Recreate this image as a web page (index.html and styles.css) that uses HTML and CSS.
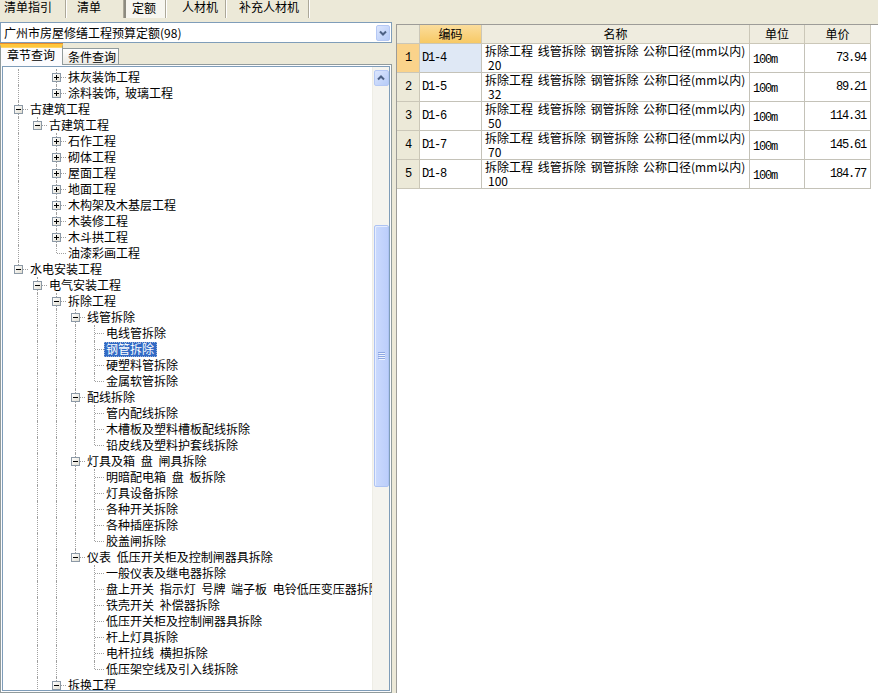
FILE: index.html
```html
<!DOCTYPE html>
<html lang="zh-CN">
<head>
<meta charset="utf-8">
<title>定额</title>
<link rel="stylesheet" href="styles.css">
</head>
<body>
<div class="topbar">
  <div class="ttab ttab-1">清单指引</div>
  <div class="ttab ttab-2">清单</div>
  <div class="ttab ttab-3 on">定额</div>
  <div class="ttab ttab-4">人材机</div>
  <div class="ttab ttab-5">补充人材机</div>
</div>
<div class="main">
  <div class="left">
    <div class="combo">
      <span class="combo-text">广州市房屋修缮工程预算定额(98)</span>
      <span class="combo-btn"><svg width="8" height="6" viewBox="0 0 8 6"><polyline points="1,1.5 4,4.5 7,1.5" fill="none" stroke="#4d6185" stroke-width="2"/></svg></span>
    </div>
    <div class="tabs">
      <div class="tab on">章节查询</div>
      <div class="tab">条件查询</div>
    </div>
    <div class="tabpage">
      <div class="tree">
        <div class="rows">
          <div class="row"><span class="g i"></span><span class="g"></span><span class="g t"><b class="bx p"></b></span><span class="lbl">抹灰装饰工程</span></div>
          <div class="row"><span class="g i"></span><span class="g"></span><span class="g l"><b class="bx p"></b></span><span class="lbl">涂料装饰, 玻璃工程</span></div>
          <div class="row"><span class="g t"><b class="bx m"></b></span><span class="lbl">古建筑工程</span></div>
          <div class="row"><span class="g i"></span><span class="g l"><b class="bx m"></b></span><span class="lbl">古建筑工程</span></div>
          <div class="row"><span class="g i"></span><span class="g"></span><span class="g t"><b class="bx p"></b></span><span class="lbl">石作工程</span></div>
          <div class="row"><span class="g i"></span><span class="g"></span><span class="g t"><b class="bx p"></b></span><span class="lbl">砌体工程</span></div>
          <div class="row"><span class="g i"></span><span class="g"></span><span class="g t"><b class="bx p"></b></span><span class="lbl">屋面工程</span></div>
          <div class="row"><span class="g i"></span><span class="g"></span><span class="g t"><b class="bx p"></b></span><span class="lbl">地面工程</span></div>
          <div class="row"><span class="g i"></span><span class="g"></span><span class="g t"><b class="bx p"></b></span><span class="lbl">木构架及木基层工程</span></div>
          <div class="row"><span class="g i"></span><span class="g"></span><span class="g t"><b class="bx p"></b></span><span class="lbl">木装修工程</span></div>
          <div class="row"><span class="g i"></span><span class="g"></span><span class="g t"><b class="bx p"></b></span><span class="lbl">木斗拱工程</span></div>
          <div class="row"><span class="g i"></span><span class="g"></span><span class="g l"></span><span class="lbl">油漆彩画工程</span></div>
          <div class="row"><span class="g l"><b class="bx m"></b></span><span class="lbl">水电安装工程</span></div>
          <div class="row"><span class="g"></span><span class="g t"><b class="bx m"></b></span><span class="lbl">电气安装工程</span></div>
          <div class="row"><span class="g"></span><span class="g i"></span><span class="g t"><b class="bx m"></b></span><span class="lbl">拆除工程</span></div>
          <div class="row"><span class="g"></span><span class="g i"></span><span class="g i"></span><span class="g t"><b class="bx m"></b></span><span class="lbl">线管拆除</span></div>
          <div class="row"><span class="g"></span><span class="g i"></span><span class="g i"></span><span class="g i"></span><span class="g t"></span><span class="lbl">电线管拆除</span></div>
          <div class="row"><span class="g"></span><span class="g i"></span><span class="g i"></span><span class="g i"></span><span class="g t"></span><span class="lbl sel">钢管拆除</span></div>
          <div class="row"><span class="g"></span><span class="g i"></span><span class="g i"></span><span class="g i"></span><span class="g t"></span><span class="lbl">硬塑料管拆除</span></div>
          <div class="row"><span class="g"></span><span class="g i"></span><span class="g i"></span><span class="g i"></span><span class="g l"></span><span class="lbl">金属软管拆除</span></div>
          <div class="row"><span class="g"></span><span class="g i"></span><span class="g i"></span><span class="g t"><b class="bx m"></b></span><span class="lbl">配线拆除</span></div>
          <div class="row"><span class="g"></span><span class="g i"></span><span class="g i"></span><span class="g i"></span><span class="g t"></span><span class="lbl">管内配线拆除</span></div>
          <div class="row"><span class="g"></span><span class="g i"></span><span class="g i"></span><span class="g i"></span><span class="g t"></span><span class="lbl">木槽板及塑料槽板配线拆除</span></div>
          <div class="row"><span class="g"></span><span class="g i"></span><span class="g i"></span><span class="g i"></span><span class="g l"></span><span class="lbl">铅皮线及塑料护套线拆除</span></div>
          <div class="row"><span class="g"></span><span class="g i"></span><span class="g i"></span><span class="g t"><b class="bx m"></b></span><span class="lbl">灯具及箱 盘 闸具拆除</span></div>
          <div class="row"><span class="g"></span><span class="g i"></span><span class="g i"></span><span class="g i"></span><span class="g t"></span><span class="lbl">明暗配电箱 盘 板拆除</span></div>
          <div class="row"><span class="g"></span><span class="g i"></span><span class="g i"></span><span class="g i"></span><span class="g t"></span><span class="lbl">灯具设备拆除</span></div>
          <div class="row"><span class="g"></span><span class="g i"></span><span class="g i"></span><span class="g i"></span><span class="g t"></span><span class="lbl">各种开关拆除</span></div>
          <div class="row"><span class="g"></span><span class="g i"></span><span class="g i"></span><span class="g i"></span><span class="g t"></span><span class="lbl">各种插座拆除</span></div>
          <div class="row"><span class="g"></span><span class="g i"></span><span class="g i"></span><span class="g i"></span><span class="g l"></span><span class="lbl">胶盖闸拆除</span></div>
          <div class="row"><span class="g"></span><span class="g i"></span><span class="g i"></span><span class="g l"><b class="bx m"></b></span><span class="lbl">仪表 低压开关柜及控制闸器具拆除</span></div>
          <div class="row"><span class="g"></span><span class="g i"></span><span class="g i"></span><span class="g"></span><span class="g t"></span><span class="lbl">一般仪表及继电器拆除</span></div>
          <div class="row"><span class="g"></span><span class="g i"></span><span class="g i"></span><span class="g"></span><span class="g t"></span><span class="lbl">盘上开关 指示灯 号牌 端子板 电铃低压变压器拆除</span></div>
          <div class="row"><span class="g"></span><span class="g i"></span><span class="g i"></span><span class="g"></span><span class="g t"></span><span class="lbl">铁壳开关 补偿器拆除</span></div>
          <div class="row"><span class="g"></span><span class="g i"></span><span class="g i"></span><span class="g"></span><span class="g t"></span><span class="lbl">低压开关柜及控制闸器具拆除</span></div>
          <div class="row"><span class="g"></span><span class="g i"></span><span class="g i"></span><span class="g"></span><span class="g t"></span><span class="lbl">杆上灯具拆除</span></div>
          <div class="row"><span class="g"></span><span class="g i"></span><span class="g i"></span><span class="g"></span><span class="g t"></span><span class="lbl">电杆拉线 横担拆除</span></div>
          <div class="row"><span class="g"></span><span class="g i"></span><span class="g i"></span><span class="g"></span><span class="g l"></span><span class="lbl">低压架空线及引入线拆除</span></div>
          <div class="row"><span class="g"></span><span class="g i"></span><span class="g t"><b class="bx m"></b></span><span class="lbl">拆换工程</span></div>
        </div>
        <div class="vscroll">
          <div class="sb-btn"><svg width="8" height="6" viewBox="0 0 8 6"><polyline points="1,4.5 4,1.5 7,4.5" fill="none" stroke="#4d6185" stroke-width="2"/></svg></div>
          <div class="sb-thumb"><svg width="7" height="8" viewBox="0 0 7 8"><path d="M0 0.5H7M0 2.5H7M0 4.5H7M0 6.5H7" stroke="#8ea7e3" stroke-width="1"/><path d="M1 1.5H7M1 3.5H7M1 5.5H7M1 7.5H7" stroke="#eef3fe" stroke-width="1"/></svg></div>
        </div>
      </div>
    </div>
  </div>
  <div class="right">
    <div class="grid">
      <div class="c h rh"></div>
      <div class="c h hsel">编码</div>
      <div class="c h">名称</div>
      <div class="c h">单位</div>
      <div class="c h">单价</div>

      <div class="c rh rsel mono">1</div>
      <div class="c code csel mono">D1-4</div>
      <div class="c name"><div>拆除工程 线管拆除 钢管拆除 公称口径(mm以内)</div><div class="l2">20</div></div>
      <div class="c unit mono">100m</div>
      <div class="c price mono">73.94</div>

      <div class="c rh mono">2</div>
      <div class="c code mono">D1-5</div>
      <div class="c name"><div>拆除工程 线管拆除 钢管拆除 公称口径(mm以内)</div><div class="l2">32</div></div>
      <div class="c unit mono">100m</div>
      <div class="c price mono">89.21</div>

      <div class="c rh mono">3</div>
      <div class="c code mono">D1-6</div>
      <div class="c name"><div>拆除工程 线管拆除 钢管拆除 公称口径(mm以内)</div><div class="l2">50</div></div>
      <div class="c unit mono">100m</div>
      <div class="c price mono">114.31</div>

      <div class="c rh mono">4</div>
      <div class="c code mono">D1-7</div>
      <div class="c name"><div>拆除工程 线管拆除 钢管拆除 公称口径(mm以内)</div><div class="l2">70</div></div>
      <div class="c unit mono">100m</div>
      <div class="c price mono">145.61</div>

      <div class="c rh mono">5</div>
      <div class="c code mono">D1-8</div>
      <div class="c name"><div>拆除工程 线管拆除 钢管拆除 公称口径(mm以内)</div><div class="l2">100</div></div>
      <div class="c unit mono">100m</div>
      <div class="c price mono">184.77</div>
    </div>
  </div>
</div>
</body>
</html>
```
FILE: styles.css
```css
* { box-sizing: border-box; }
html, body { margin: 0; }
body {
  height: 693px;
  overflow: hidden;
  background: #ece9d8;
  font-family: "Noto Sans CJK SC", "Noto Sans", sans-serif;
  font-size: 12px;
  color: #000;
  display: flex;
  flex-direction: column;
}

/* top tab strip */
.topbar { height: 21px; flex: none; display: flex; }
.ttab {
  height: 18px;
  line-height: 13px;
  white-space: nowrap;
  border-right: 1px solid #aca899;
  box-shadow: 1px 0 0 #fff;
}
.ttab-1 { width: 66px; padding-left: 4px; }
.ttab-2 { width: 58px; padding-left: 11px; }
.ttab-3 { width: 42px; padding-left: 6px; }
.ttab-4 { width: 60px; padding-left: 16px; }
.ttab-5 { width: 83px; padding-left: 13px; }
.ttab.on {
  background: #f7f6f0;
  border-left: 2px solid #8d8b80;
  padding-top: 1px;
}

.main { flex: 1; display: flex; gap: 4px; min-height: 0; }
.left { width: 392px; flex: none; display: flex; flex-direction: column; }

/* combo */
.combo {
  margin-top: 1px;
  height: 21px;
  flex: none;
  border: 1px solid #7f9db9;
  background: #fff;
  display: flex;
  align-items: center;
  justify-content: space-between;
  padding: 0 1px 0 3px;
}
.combo-text { line-height: 16px; white-space: nowrap; }
.combo-btn {
  width: 14px;
  height: 16px;
  border: 1px solid #b5c8f4;
  border-radius: 2px;
  background: linear-gradient(135deg, #dce6fd, #b6cbf8);
  display: flex;
  align-items: center;
  justify-content: center;
}

/* sub tabs */
.tabs {
  margin-top: 1px;
  height: 21px;
  flex: none;
  display: flex;
  align-items: flex-end;
  margin-bottom: -1px;
}
.tab {
  height: 17px;
  width: 56px;
  padding-left: 5px;
  line-height: 15px;
  border: 1px solid #919b9c;
  border-left: none;
  background: linear-gradient(#ffffff, #ecebe6);
  white-space: nowrap;
}
.tab.on {
  position: relative;
  z-index: 1;
  height: 21px;
  width: 63px;
  padding-left: 6px;
  line-height: 16px;
  border-left: 1px solid #919b9c;
  border-top: 3px solid #ffc73c;
  border-bottom: none;
  box-shadow: inset 0 1px 0 #fdd56a, 0 -1px 0 #e68b2c;
  background: #fcfcfe;
}

.tabpage {
  flex: 1;
  min-height: 0;
  border: 1px solid #919b9c;
  padding: 1px;
  background: #fcfcfe;
  display: flex;
}
.tree {
  flex: 1;
  min-width: 0;
  border: 1px solid #7f9db9;
  background: #fff;
  display: flex;
  overflow: hidden;
}
.rows {
  flex: 1;
  min-width: 0;
  padding: 2px 0 0 6px;
  overflow: hidden;
  white-space: nowrap;
}
.row { display: flex; height: 16px; }
.g {
  width: 19px;
  height: 16px;
  flex: none;
  position: relative;
  display: flex;
  align-items: center;
  justify-content: center;
}
.g.i::before, .g.t::before, .g.l::before {
  content: "";
  position: absolute;
  left: 9px;
  top: 0;
  bottom: 0;
  border-left: 1px dotted #a0a0a0;
}
.g.l::before { bottom: 8px; }
.g.t::after, .g.l::after {
  content: "";
  position: absolute;
  left: 10px;
  right: 0;
  top: 8px;
  border-top: 1px dotted #a0a0a0;
}
.bx {
  width: 9px;
  height: 9px;
  margin-top: 1px;
  border: 1px solid #8c99a6;
  background: linear-gradient(135deg, #ffffff, #e2dfd3);
  position: relative;
  z-index: 1;
}
.bx::before {
  content: "";
  position: absolute;
  left: 1px;
  top: 3px;
  width: 5px;
  height: 1px;
  background: #000;
}
.bx.p::after {
  content: "";
  position: absolute;
  left: 3px;
  top: 1px;
  width: 1px;
  height: 5px;
  background: #000;
}
.lbl {
  height: 16px;
  line-height: 16px;
  padding: 0 2px;
  word-spacing: 3px;
}
.lbl.sel {
  background: #316ac5;
  color: #fff;
  height: 15px;
  margin-top: 1px;
  line-height: 14px;
  outline: 1px dotted #9fb4d8;
  outline-offset: -1px;
  padding: 0 3px 0 2px;
}

/* scrollbar */
.vscroll {
  width: 17px;
  flex: none;
  background: #f5f4ef;
  border-left: 1px solid #eeede6;
  display: flex;
  flex-direction: column;
  align-items: center;
  padding-top: 3px;
}
.sb-btn {
  width: 15px;
  height: 16px;
  flex: none;
  border: 1px solid #b5c8f4;
  border-radius: 2px;
  background: linear-gradient(135deg, #dce6fd, #b6cbf8);
  display: flex;
  align-items: center;
  justify-content: center;
}
.sb-thumb {
  margin-top: 139px;
  width: 15px;
  height: 262px;
  flex: none;
  border: 1px solid #aec3f3;
  border-radius: 2px;
  background: linear-gradient(90deg, #cbdafd, #bccefb);
  box-shadow: inset 1px 1px 0 #e6edfe;
  display: flex;
  align-items: center;
  justify-content: center;
}

/* right grid */
.right {
  flex: 1;
  margin-top: 3px;
  background: #fff;
  border-left: 1px solid #9d9c98;
  border-top: 1px solid #9d9c98;
}
.grid {
  display: grid;
  grid-template-columns: 23px 62px 268px 55px 66px;
  grid-template-rows: 19px repeat(5, 29px);
  width: 474px;
}
.c {
  border-right: 1px solid #c4c2b8;
  border-bottom: 1px solid #c4c2b8;
  display: flex;
  align-items: center;
  white-space: nowrap;
  overflow: hidden;
}
.h {
  background: #efecdf;
  justify-content: center;
  line-height: 16px;
  border-color: #cbc7b8;
}
.hsel { background: linear-gradient(#fbdd9c, #f7c965); }
.rh {
  background: #ece9d8;
  justify-content: center;
  border-color: #cbc7b8;
}
.rsel { background: #fad38b; }
.csel { background: #dfe8f5; }
.mono {
  font-family: "Liberation Mono", monospace;
  font-size: 12px;
  letter-spacing: -1.2px;
}
.code { padding-left: 2px; }
.name {
  flex-direction: column;
  align-items: flex-start;
  justify-content: center;
  padding: 0 3px;
  line-height: 14px;
  word-spacing: 2px;
}
.name .l2 { padding-left: 3px; }
.unit { padding-left: 3px; padding-top: 3px; }
.price { justify-content: flex-end; padding-right: 4px; }
```
